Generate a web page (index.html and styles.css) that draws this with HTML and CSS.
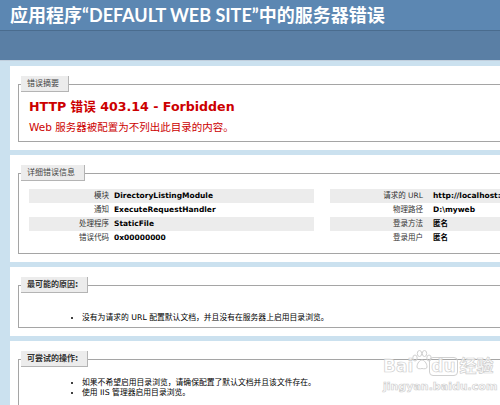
FILE: index.html
```html
<!DOCTYPE html>
<html lang="zh-CN">
<head>
<meta charset="utf-8">
<title>IIS 8.0 详细错误 - 403.14 - Forbidden</title>
<link rel="stylesheet" href="styles.css">
</head>
<body>
<div class="header"><h1>应用程序“DEFAULT WEB SITE”中的服务器错误</h1></div>
<div class="band"></div>
<div class="content">
  <div class="panel">
    <fieldset>
      <legend>错误摘要</legend>
      <h3>HTTP 错误 403.14 - Forbidden</h3>
      <h4>Web 服务器被配置为不列出此目录的内容。</h4>
    </fieldset>
  </div>
  <div class="panel">
    <fieldset>
      <legend>详细错误信息</legend>
      <div class="details">
        <table class="left">
          <tr class="alt"><th>模块</th><td>DirectoryListingModule</td></tr>
          <tr><th>通知</th><td>ExecuteRequestHandler</td></tr>
          <tr class="alt"><th>处理程序</th><td>StaticFile</td></tr>
          <tr><th>错误代码</th><td>0x00000000</td></tr>
        </table>
        <table class="right">
          <tr class="alt"><th>请求的 URL</th><td>http://localhost:80/</td></tr>
          <tr><th>物理路径</th><td>D:\myweb</td></tr>
          <tr class="alt"><th>登录方法</th><td>匿名</td></tr>
          <tr><th>登录用户</th><td>匿名</td></tr>
        </table>
      </div>
    </fieldset>
  </div>
  <div class="panel">
    <fieldset>
      <legend class="strong">最可能的原因:</legend>
      <ul class="causes">
        <li>没有为请求的 URL 配置默认文档，并且没有在服务器上启用目录浏览。</li>
      </ul>
    </fieldset>
  </div>
  <div class="panel">
    <fieldset>
      <legend class="strong">可尝试的操作:</legend>
      <ul class="actions">
        <li>如果不希望启用目录浏览，请确保配置了默认文档并且该文件存在。</li>
        <li>使用 IIS 管理器启用目录浏览。</li>
      </ul>
    </fieldset>
  </div>
</div>
<div class="watermark">
  <div class="wm-top"><span>Bai</span><svg class="paw" width="22" height="20" viewBox="0 0 22 20"><g fill="none" stroke="#d0d0d0" stroke-width="1"><ellipse cx="4" cy="8" rx="2.2" ry="3"/><ellipse cx="8.5" cy="3.5" rx="2.2" ry="3"/><ellipse cx="13.5" cy="3.5" rx="2.2" ry="3"/><ellipse cx="18" cy="8" rx="2.2" ry="3"/><path d="M6 17c0-4 3-7 5-7s5 3 5 7c0 2-3 2-5 1.5C9 19 6 19 6 17z"/></g></svg><span class="du">du</span><span>经验</span></div>
  <div class="wm-url">jingyan.baidu.com</div>
</div>
</body>
</html>
```

FILE: styles.css
```css
html, body {
  margin: 0;
  padding: 0;
}
body {
  background: #cbe1ef;
  font-family: "DejaVu Sans", "Noto Sans CJK SC", sans-serif;
  font-size: 8px;
  color: #000;
  width: 500px;
  height: 405px;
  overflow: hidden;
  position: relative;
}
.header {
  background: #5c87b2;
  height: 30px;
  padding: 0 10px;
  box-sizing: border-box;
}
.header h1 {
  margin: 0;
  font-family: "Lato", "Noto Sans CJK SC", sans-serif;
  font-size: 18px;
  font-weight: bold;
  color: #fff;
  line-height: 30px;
  white-space: nowrap;
}
.band {
  height: 29px;
  background: #5a7fa5;
  border-top: 1px solid #4a6c8e;
  border-bottom: 1px solid #c1cfdd;
}
.content {
  padding-top: 5px;
  padding-left: 10px;
}
.panel {
  background: #fff;
  width: 620px;
  padding: 10px 0 8px 8px;
  margin-bottom: 5px;
}
fieldset {
  margin: 0;
  border: 1px solid #a5a5a5;
  padding: 0 0 7px 10px;
}
legend {
  margin-left: -8px;
  padding: 0 9px 0 6px;
  height: 16px;
  line-height: 16px;
  background: #ececec;
  border-right: 1px solid #b4b4b4;
  border-bottom: 1px solid #b4b4b4;
  color: #444;
  font-size: 8px;
  box-sizing: border-box;
}
legend.strong {
  font-weight: bold;
  color: #333;
}
h3 {
  margin: 8px 0 0 0;
  font-size: 12.6px;
  line-height: 14px;
  color: #cc0000;
  font-weight: bold;
  white-space: nowrap;
}
h4 {
  margin: 7px 0 0 0;
  font-size: 10.5px;
  line-height: 13px;
  color: #cc0000;
  font-weight: normal;
  white-space: nowrap;
}
.details {
  display: flex;
  gap: 16px;
  margin-top: 8px;
  margin-bottom: 1px;
}
table {
  border-collapse: collapse;
  border: none;
}
table.left {
  width: 285px;
}
table.right {
  width: 300px;
}
th, td {
  height: 14px;
  padding: 0;
  font-size: 7.5px;
  line-height: 14px;
  vertical-align: middle;
  white-space: nowrap;
}
th {
  text-align: right;
  font-weight: normal;
  color: #333;
}
table.left th {
  width: 80px;
  padding-right: 5px;
}
table.right th {
  width: 93px;
  padding-right: 10px;
}
td {
  font-weight: bold;
  text-align: left;
}
tr.alt th, tr.alt td {
  background: #ececec;
}
ul {
  margin: 0;
  padding-left: 53px;
  list-style: disc;
}
li {
  font-size: 7.8px;
  line-height: 10px;
  white-space: nowrap;
}
ul.causes {
  margin-top: 20px;
  margin-bottom: -3px;
}
ul.actions {
  margin-top: 11px;
}
.watermark {
  position: absolute;
  left: 383px;
  top: 350px;
  font-family: "DejaVu Sans", "Noto Sans CJK SC", sans-serif;
  color: rgba(255, 255, 255, 0.7);
  -webkit-text-stroke: 0.7px #cfcfcf;
}
.wm-top {
  display: flex;
  align-items: flex-end;
  font-size: 17px;
  line-height: 20px;
  font-weight: bold;
}
.paw {
  margin-bottom: 6px;
  margin-left: -2px;
}
.wm-top .du {
  border: 1px solid #d0d0d0;
  border-radius: 4px;
  padding: 0 1px;
  line-height: 17px;
  margin: 0 2px 0 -4px;
}
.wm-url {
  font-size: 11px;
  font-weight: bold;
  margin-top: 4px;
}
```
